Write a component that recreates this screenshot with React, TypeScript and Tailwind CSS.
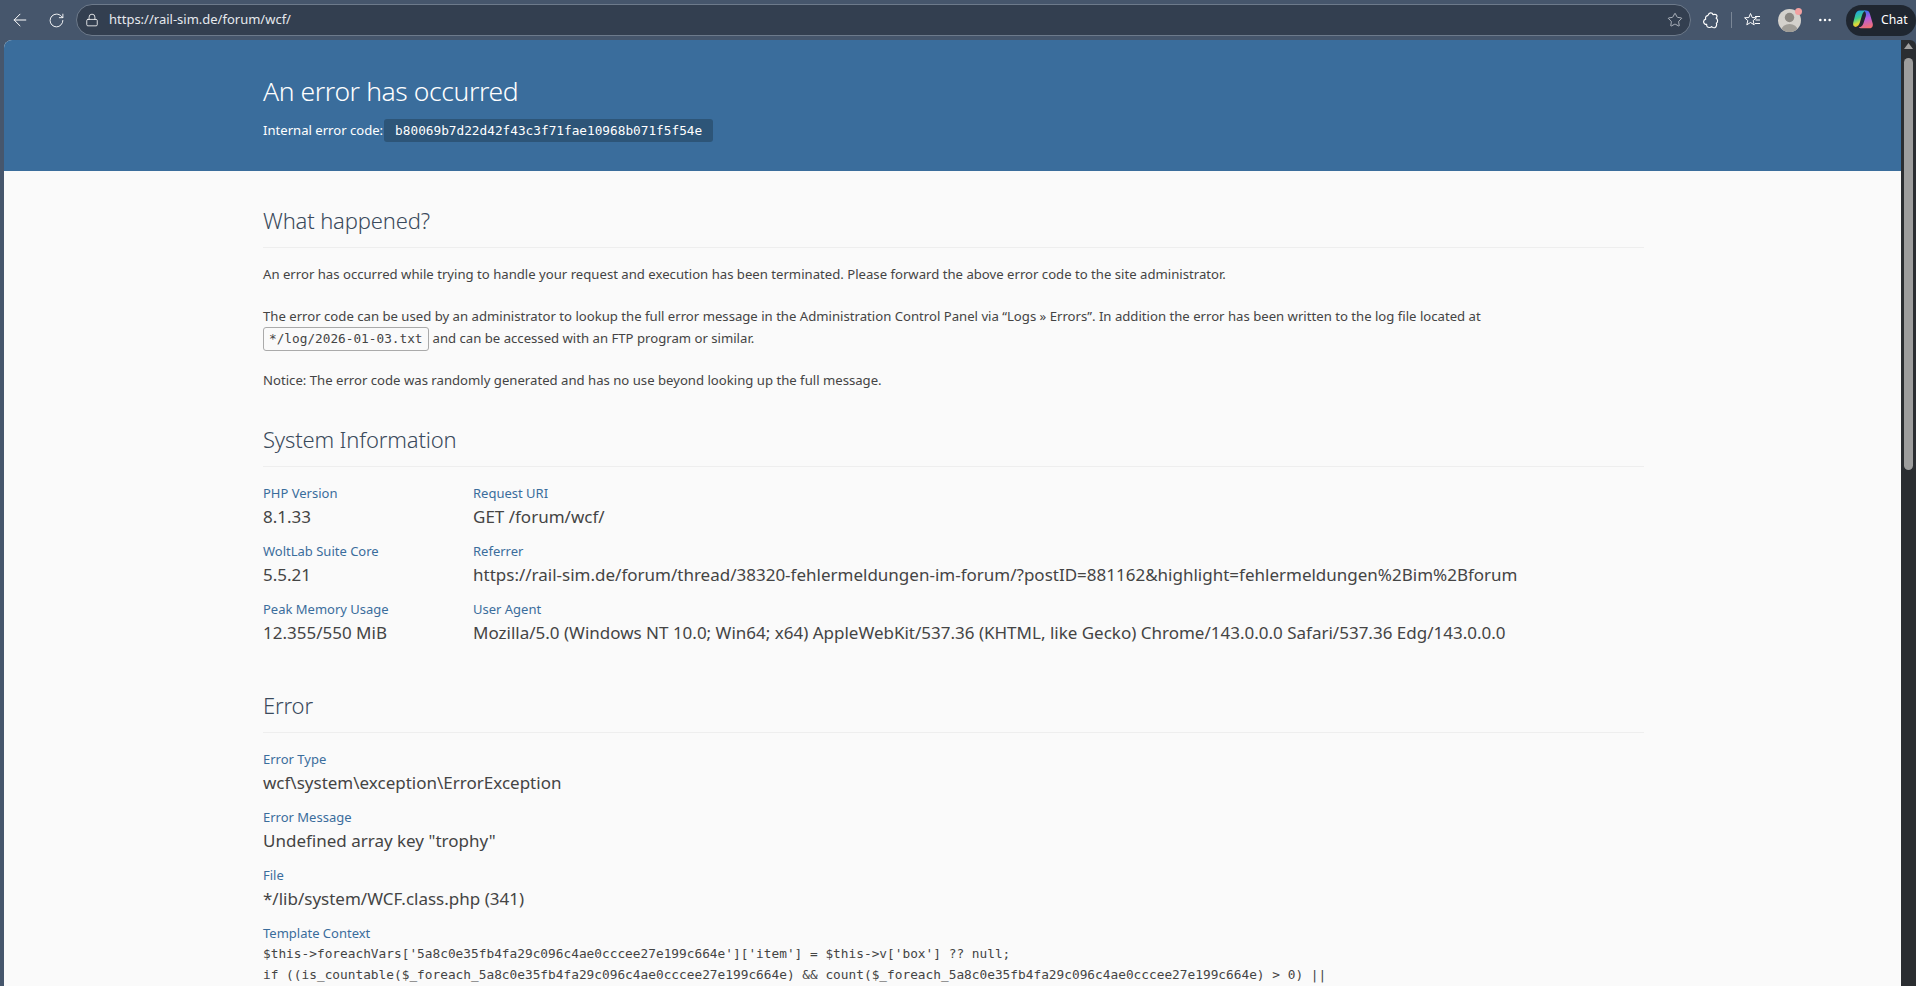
import { ArrowLeft, RotateCw, Lock, Star, MoreHorizontal } from "lucide-react"

const mono = "font-['DejaVu_Sans_Mono','Liberation_Mono',monospace]"

function Heading({ children }: { children: string }) {
  return (
    <h2 className="border-b border-[#eeeeee] pb-[12px] text-[22px] leading-[30px] font-light tracking-[-0.15px] text-[#3a4a5c]">
      {children}
    </h2>
  )
}

function Field({ label, children }: { label: string; children: React.ReactNode }) {
  return (
    <div className="h-[58px]">
      <div className="text-[13px] leading-[20px] text-[#3a6d9c]">{label}</div>
      <div className="mt-[1px] text-[17px] leading-[26px] whitespace-nowrap text-[#444444]">{children}</div>
    </div>
  )
}

function CopilotLogo() {
  return (
    <svg width="22" height="22" viewBox="0 0 24 24">
      <defs>
        <linearGradient id="cpa" x1="0.3" y1="0" x2="0.6" y2="1">
          <stop offset="0" stopColor="#1e9be8" />
          <stop offset="0.45" stopColor="#3ccf8e" />
          <stop offset="0.75" stopColor="#d8dc3a" />
          <stop offset="1" stopColor="#f79a2e" />
        </linearGradient>
        <linearGradient id="cpb" x1="0.4" y1="0" x2="0.6" y2="1">
          <stop offset="0" stopColor="#2a6ff0" />
          <stop offset="0.45" stopColor="#b45ce0" />
          <stop offset="1" stopColor="#f5706e" />
        </linearGradient>
      </defs>
      <path d="M8.500 1.500h6.500c-2 .7-3.200 2.400-4 5l-2.500 8.500c-.9 3-2.600 4.500-4.500 4.500C1.800 19.500.8 17.500 1.300 15L3.800 5.500C4.500 3 6.200 1.500 8.500 1.500z" fill="url(#cpa)" />
      <path d="M13 1.500h2.500c2 0 3.300 1.200 3.900 3.300l3.200 11c.7 2.900-.8 5.200-3.600 5.200H9.500c-1.200 0-1.700-.4-2-1 2.300 0 4-1.500 5-4.500l2.600-8c.6-2.700-.4-5-2.100-6z" fill="url(#cpb)" />
    </svg>
  )
}

function ExtensionsIcon() {
  return (
    <svg width="17" height="17" viewBox="0 0 16 16" fill="none" stroke="white" strokeWidth="1.1" strokeLinejoin="round">
      <path d="M6 2.700a2.200 2.200 0 0 1 4.300-.2c.9-.4 3.200-.4 3.700.8.400 1-.2 2-.7 2.500 1.600.7 2 3.800.2 4.800.7 1.300 0 3.700-1.400 4.100-1.300.3-2.500-.2-3-1-.8 1-3 1.200-4 .3-.7-.6-.8-1.500-.7-2.300-1.500.2-3-1-2.900-2.700.1-1.200 1-2.100 2-2.300-.5-1.200 0-2.800 1.200-3z" />
    </svg>
  )
}

function FavoritesIcon() {
  return (
    <svg width="17" height="16" viewBox="0 0 17 16" fill="none" stroke="white" strokeWidth="1" strokeLinejoin="round">
      <path d="M6.500 1.500l1.700 4 4.300.3-3.300 2.800 1 4.200-3.700-2.300-3.700 2.300 1-4.200L.6 5.800l4.300-.3z" />
      <path d="M11 4.500h5M11.500 8h4.500M11 11.500h5" />
    </svg>
  )
}

function Avatar() {
  return (
    <div className="relative ml-[17px] h-[23px] w-[23px]">
      <svg width="23" height="23" viewBox="0 0 23 23">
        <clipPath id="avatar-clip">
          <circle cx="11.500" cy="11.500" r="11.500" />
        </clipPath>
        <circle cx="11.500" cy="11.500" r="11.500" fill="#d4d1cc" />
        <g clipPath="url(#avatar-clip)" fill="#8a8782">
          <circle cx="11.500" cy="8.500" r="4.700" />
          <ellipse cx="11.500" cy="21" rx="8" ry="6" fill="#a09d97" />
        </g>
      </svg>
      <span className="absolute -top-[1px] -right-[1px] h-[7px] w-[7px] rounded-full bg-[#f2a0a0]" />
    </div>
  )
}

function Toolbar() {
  return (
    <div className="flex h-10 shrink-0 items-center bg-[#46566c] text-white">
      <ArrowLeft className="ml-[10px] h-[20px] w-[20px]" strokeWidth={1.2} />
      <RotateCw className="ml-[18px] h-[17px] w-[17px]" strokeWidth={1.3} />
      <div className="ml-[11px] flex h-[32px] w-[1617px] items-center rounded-full border border-[#6d7a8b] bg-[#333f50] pr-[7px] pl-[8px]">
        <Lock className="h-[14px] w-[14px]" strokeWidth={1.4} />
        <span className="ml-[10px] text-[13px] text-[#e6e9ee]">https://rail-sim.de/forum/wcf/</span>
        <Star className="ml-auto h-[16px] w-[16px] text-[#c9ced6]" strokeWidth={1.2} />
      </div>
      <div className="ml-[11px]">
        <ExtensionsIcon />
      </div>
      <div className="ml-[12px] h-[16px] w-px bg-[#7a8696]" />
      <div className="ml-[12px]">
        <FavoritesIcon />
      </div>
      <Avatar />
      <MoreHorizontal className="ml-[16px] h-[16px] w-[16px]" strokeWidth={1.8} />
      <div className="ml-[13px] flex h-[31px] w-[70px] items-center gap-[7px] rounded-full bg-[#1f2630] pl-[6px] text-[12.2px]">
        <CopilotLogo />
        <span>Chat</span>
      </div>
    </div>
  )
}

function Scrollbar() {
  return (
    <div className="flex w-[15px] shrink-0 flex-col items-center rounded-tr-[6px] bg-[#2a2d31]">
      <svg width="9" height="6" viewBox="0 0 9 6" className="mt-[3px]">
        <path d="M4.500 0L9 6H0z" fill="#a0a0a0" />
      </svg>
      <div className="mt-[9px] h-[412px] w-[9px] rounded-full bg-[#9d9d9d]" />
    </div>
  )
}

export default function App() {
  return (
    <div className="flex h-[986px] w-[1916px] flex-col overflow-hidden bg-[#46566c] font-['Noto_Sans','Open_Sans',sans-serif]">
      <Toolbar />
      <div className="flex min-h-0 flex-1 pl-[4px]">
        <main className="min-w-0 flex-1 overflow-hidden rounded-tl-[8px] bg-[#fafafa]">
          <header className="h-[131px] bg-[#3a6d9c] pt-[31px] pl-[259px] text-white">
            <h1 className="text-[26.5px] leading-[40px] font-light tracking-[-0.4px]">An error has occurred</h1>
            <div className="mt-[8px] flex items-center text-[13.1px] leading-[23px]">
              Internal error code:
              <code className={`ml-[1px] rounded-[3px] bg-[#2d5578] px-[11px] py-[1px] text-[12.75px] leading-[21px] ${mono}`}>
                b80069b7d22d42f43c3f71fae10968b071f5f54e
              </code>
            </div>
          </header>
          <div className="mr-[257px] ml-[259px] pt-[34px] text-[13.15px] text-[#444444]">
            <Heading>What happened?</Heading>
            <p className="mt-[16px] leading-[20px]">
              An error has occurred while trying to handle your request and execution has been terminated. Please forward the above error code to the site administrator.
            </p>
            <p className="mt-[22px] leading-[21px]">
              The error code can be used by an administrator to lookup the full error message in the Administration Control Panel via “Logs » Errors”. In addition the error has been written to the log file located at
              <br />
              <kbd className={`mr-[4px] inline-block h-[24px] rounded-[3px] border border-[#aaaaaa] px-[5px] align-middle text-[12.75px] leading-[22px] ${mono}`}>*/log/2026-01-03.txt</kbd>
              and can be accessed with an FTP program or similar.
            </p>
            <p className="mt-[19px] leading-[20px]">Notice: The error code was randomly generated and has no use beyond looking up the full message.</p>

            <div className="mt-[34px]">
              <Heading>System Information</Heading>
            </div>
            <div className="mt-[16px] grid grid-cols-[210px_1fr]">
              <div>
                <Field label="PHP Version">8.1.33</Field>
                <Field label="WoltLab Suite Core">5.5.21</Field>
                <Field label="Peak Memory Usage">12.355/550 MiB</Field>
              </div>
              <div>
                <Field label="Request URI">GET /forum/wcf/</Field>
                <Field label="Referrer">https://rail-sim.de/forum/thread/38320-fehlermeldungen-im-forum/?postID=881162&amp;highlight=fehlermeldungen%2Bim%2Bforum</Field>
                <Field label="User Agent">Mozilla/5.0 (Windows NT 10.0; Win64; x64) AppleWebKit/537.36 (KHTML, like Gecko) Chrome/143.0.0.0 Safari/537.36 Edg/143.0.0.0</Field>
              </div>
            </div>

            <div className="mt-[33px]">
              <Heading>Error</Heading>
            </div>
            <div className="mt-[16px]">
              <Field label="Error Type">wcf\system\exception\ErrorException</Field>
              <Field label="Error Message">Undefined array key "trophy"</Field>
              <Field label="File">*/lib/system/WCF.class.php (341)</Field>
              <div className="text-[13px] leading-[20px] text-[#3a6d9c]">Template Context</div>
              <pre className={`text-[12.8px] leading-[21px] text-[#444444] ${mono}`}>
                {"$this->foreachVars['5a8c0e35fb4fa29c096c4ae0cccee27e199c664e']['item'] = $this->v['box'] ?? null;\nif ((is_countable($_foreach_5a8c0e35fb4fa29c096c4ae0cccee27e199c664e) && count($_foreach_5a8c0e35fb4fa29c096c4ae0cccee27e199c664e) > 0) ||"}
              </pre>
            </div>
          </div>
        </main>
        <Scrollbar />
      </div>
    </div>
  )
}
